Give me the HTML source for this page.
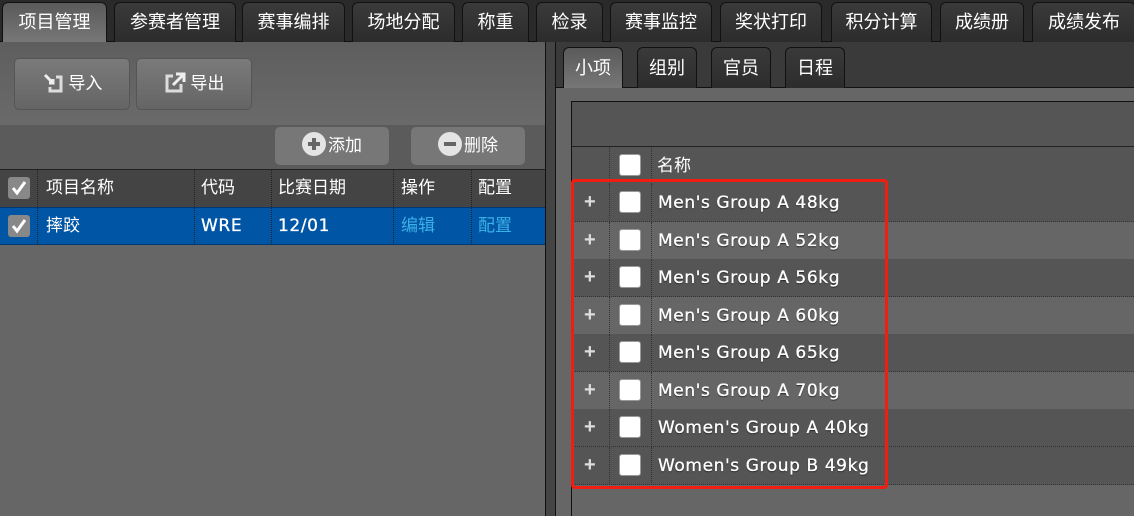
<!DOCTYPE html>
<html><head><meta charset="utf-8"><style>
*{box-sizing:border-box;margin:0;padding:0}
body{width:1134px;height:516px;overflow:hidden;background:#666;font-family:"Liberation Sans","Noto Sans CJK SC",sans-serif;color:#fff;position:relative;font-size:17px}
.abs{position:absolute}
.topbar{left:0;top:0;width:1134px;height:42px;background:#2a2a2a;border-bottom:1px solid #111}
.tab{position:absolute;top:2px;height:40px;border:1px solid #111;border-bottom:none;border-radius:6px 6px 0 0;background:linear-gradient(#3a3a3a,#2c2c2c);text-align:center;line-height:38px;font-size:18px}
.tab.act{background:linear-gradient(#5a5a5a,#777)}
.btn{position:absolute;border:1px solid #555;border-radius:5px;background:linear-gradient(#7a7a7a,#656565);text-align:center;font-size:17px;color:#fff}
.cell{position:absolute;font-size:17px;line-height:37px}
.cb{position:absolute;width:22px;height:22px;background:#fff;border:1px solid #999;border-radius:3px}
.cbd{position:absolute;width:22px;height:22px;background:#888;border-radius:3px}
.row{position:absolute;left:572px;width:562px;height:38px;border-bottom:1px dotted #333}
.dv{position:absolute;top:0;height:38px;border-left:1px dotted #333}
.rt{position:absolute;left:86px;top:1px;line-height:37px;font-family:"DejaVu Sans",sans-serif;font-size:17px;letter-spacing:0.6px;-webkit-text-stroke:0.3px #fff;text-shadow:0 1px 1px #222}
.plus{position:absolute;left:12px;line-height:37px;font-weight:bold;font-size:20px;color:#ddd}
.ic{display:inline-block;width:24px;height:24px;border-radius:50%;background:#e4e4e4;vertical-align:-5px;position:relative;margin-right:2px}
</style></head><body>
<div class="abs topbar"></div>
<div class="tab act" style="left:2px;width:105px">项目管理</div>
<div class="tab" style="left:114px;width:122px">参赛者管理</div>
<div class="tab" style="left:242px;width:103px">赛事编排</div>
<div class="tab" style="left:352px;width:103px">场地分配</div>
<div class="tab" style="left:462px;width:67px">称重</div>
<div class="tab" style="left:536px;width:67px">检录</div>
<div class="tab" style="left:610px;width:102px">赛事监控</div>
<div class="tab" style="left:720px;width:102px">奖状打印</div>
<div class="tab" style="left:831px;width:101px">积分计算</div>
<div class="tab" style="left:940px;width:84px">成绩册</div>
<div class="tab" style="left:1032px;width:104px">成绩发布</div>

<div class="abs" style="left:0;top:42px;width:546px;height:83px;background:linear-gradient(#5e5e5e,#6a6a6a)"></div>
<div class="btn" style="left:14px;top:58px;width:116px;height:52px;line-height:50px"><svg width="22" height="22" viewBox="0 0 22 22" style="vertical-align:-4px"><path d="M3 4 L11 12 M7 12 H11 V8" stroke="#eee" stroke-width="3" fill="none"/><path d="M14 6 H19 V20 H8 V16" stroke="#ddd" stroke-width="3" fill="none"/></svg> 导入</div>
<div class="btn" style="left:136px;top:58px;width:116px;height:52px;line-height:50px"><svg width="22" height="22" viewBox="0 0 22 22" style="vertical-align:-4px"><path d="M9 5 H3 V20 H17 V13" stroke="#ddd" stroke-width="3" fill="none"/><path d="M9 14 L19 4 M12 3 H20 V11" stroke="#eee" stroke-width="3" fill="none"/></svg> 导出</div>
<div class="abs" style="left:0;top:125px;width:546px;height:44px;background:#5b5b5b"></div>
<div class="btn" style="left:275px;top:127px;width:114px;height:38px;line-height:38px;border:none;background:#777"><span class="ic"><svg width="24" height="24" style="position:absolute;left:0;top:0"><path d="M12 6 V18 M6 12 H18" stroke="#666" stroke-width="4"/></svg></span>添加</div>
<div class="btn" style="left:411px;top:127px;width:114px;height:38px;line-height:38px;border:none;background:#777"><span class="ic"><svg width="24" height="24" style="position:absolute;left:0;top:0"><path d="M6 12 H18" stroke="#666" stroke-width="4"/></svg></span>删除</div>
<div class="abs" style="left:0;top:169px;width:546px;height:38px;background:#444;border-top:1px solid #222"></div>
<div class="abs" style="left:0;top:207px;width:546px;height:38px;background:#0055a5;border-top:1px solid #003a75;border-bottom:1px solid #003a75"></div>
<div class="cbd" style="left:8px;top:177px"><svg width="22" height="22"><path d="M5 11 L9 16 L17 5" stroke="#fff" stroke-width="3" fill="none"/></svg></div>
<div class="cbd" style="left:8px;top:215px"><svg width="22" height="22"><path d="M5 11 L9 16 L17 5" stroke="#fff" stroke-width="3" fill="none"/></svg></div>
<div class="cell" style="left:46px;top:169px">项目名称</div>
<div class="cell" style="left:201px;top:169px">代码</div>
<div class="cell" style="left:278px;top:169px">比赛日期</div>
<div class="cell" style="left:401px;top:169px">操作</div>
<div class="cell" style="left:478px;top:169px">配置</div>
<div class="cell" style="left:46px;top:207px">摔跤</div>
<div class="cell" style="left:201px;top:208px;font-family:'DejaVu Sans',sans-serif;font-size:17px;letter-spacing:0.6px;-webkit-text-stroke:0.3px #fff">WRE</div>
<div class="cell" style="left:278px;top:208px;font-family:'DejaVu Sans',sans-serif;font-size:17px;letter-spacing:0.6px;-webkit-text-stroke:0.3px #fff">12/01</div>
<div class="cell" style="left:401px;top:207px;color:#3ab0e8">编辑</div>
<div class="cell" style="left:478px;top:207px;color:#3ab0e8">配置</div>
<div class="abs" style="left:37px;top:169px;height:76px;border-left:1px dotted #222"></div>
<div class="abs" style="left:194px;top:169px;height:76px;border-left:1px dotted #222"></div>
<div class="abs" style="left:271px;top:169px;height:76px;border-left:1px dotted #222"></div>
<div class="abs" style="left:393px;top:169px;height:76px;border-left:1px dotted #222"></div>
<div class="abs" style="left:471px;top:169px;height:76px;border-left:1px dotted #222"></div>
<div class="abs" style="left:545px;top:42px;width:11px;height:474px;background:#444;border-left:1px solid #111;border-right:1px solid #111"></div>

<div class="abs" style="left:556px;top:42px;width:578px;height:46px;background:#3a3a3a;border-bottom:1px solid #111"></div>
<div class="tab act" style="left:563px;top:47px;width:60px;height:41px;line-height:40px">小项</div>
<div class="tab" style="left:637px;top:47px;width:60px;height:41px;line-height:40px">组别</div>
<div class="tab" style="left:711px;top:47px;width:60px;height:41px;line-height:40px">官员</div>
<div class="tab" style="left:785px;top:47px;width:60px;height:41px;line-height:40px">日程</div>
<div class="abs" style="left:571px;top:101px;width:563px;height:46px;background:#555;border-top:1px solid #111;border-left:1px solid #111;border-bottom:1px solid #222"></div>
<div class="abs" style="left:571px;top:147px;width:563px;height:37px;background:#555;border-left:1px solid #111"></div>
<div class="abs" style="left:571px;top:184px;height:332px;border-left:1px solid #111"></div>
<div class="cb" style="left:619px;top:154px"></div>
<div class="cell" style="left:657px;top:147px">名称</div>
<div class="abs" style="left:609px;top:147px;height:37px;border-left:1px dotted #333"></div>
<div class="abs" style="left:651px;top:147px;height:37px;border-left:1px dotted #333"></div>

<div class="row" style="top:184px;background:#555"><div class="dv" style="left:37px"></div><div class="dv" style="left:79px"></div><span class="plus">+</span><div class="cb" style="left:47px;top:7px"></div><span class="rt">Men's Group A 48kg</span></div>
<div class="row" style="top:222px;background:#666"><div class="dv" style="left:37px"></div><div class="dv" style="left:79px"></div><span class="plus">+</span><div class="cb" style="left:47px;top:7px"></div><span class="rt">Men's Group A 52kg</span></div>
<div class="row" style="top:259px;background:#555"><div class="dv" style="left:37px"></div><div class="dv" style="left:79px"></div><span class="plus">+</span><div class="cb" style="left:47px;top:7px"></div><span class="rt">Men's Group A 56kg</span></div>
<div class="row" style="top:297px;background:#666"><div class="dv" style="left:37px"></div><div class="dv" style="left:79px"></div><span class="plus">+</span><div class="cb" style="left:47px;top:7px"></div><span class="rt">Men's Group A 60kg</span></div>
<div class="row" style="top:334px;background:#555"><div class="dv" style="left:37px"></div><div class="dv" style="left:79px"></div><span class="plus">+</span><div class="cb" style="left:47px;top:7px"></div><span class="rt">Men's Group A 65kg</span></div>
<div class="row" style="top:372px;background:#666"><div class="dv" style="left:37px"></div><div class="dv" style="left:79px"></div><span class="plus">+</span><div class="cb" style="left:47px;top:7px"></div><span class="rt">Men's Group A 70kg</span></div>
<div class="row" style="top:409px;background:#555"><div class="dv" style="left:37px"></div><div class="dv" style="left:79px"></div><span class="plus">+</span><div class="cb" style="left:47px;top:7px"></div><span class="rt">Women's Group A 40kg</span></div>
<div class="row" style="top:447px;background:#555"><div class="dv" style="left:37px"></div><div class="dv" style="left:79px"></div><span class="plus">+</span><div class="cb" style="left:47px;top:7px"></div><span class="rt">Women's Group B 49kg</span></div>

<div class="abs" style="left:571px;top:179px;width:317px;height:310px;border:3px solid #f01d10;border-radius:4px"></div>
</body></html>
